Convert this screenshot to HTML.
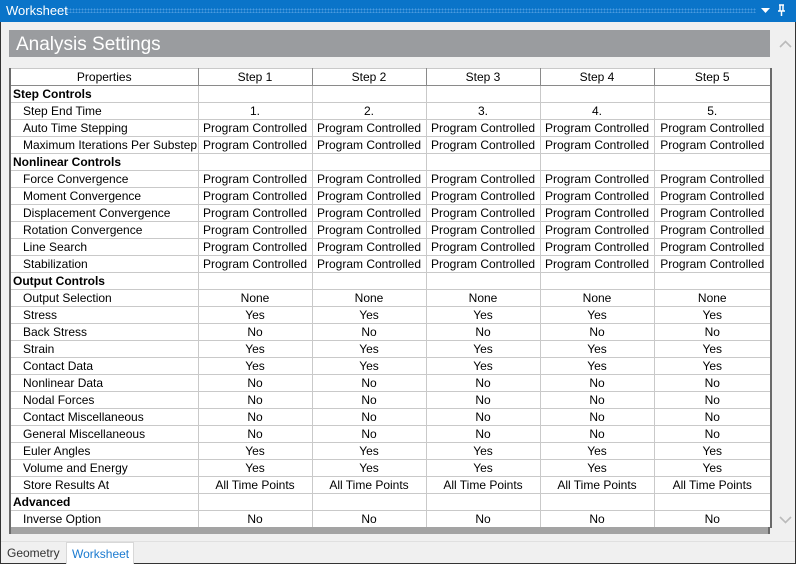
<!DOCTYPE html>
<html><head><meta charset="utf-8"><style>
*{margin:0;padding:0;box-sizing:border-box}
body{width:796px;height:564px;overflow:hidden;background:#f0f0f0;font-family:"Liberation Sans",sans-serif;font-size:12px;color:#000;position:relative}
.frame{position:absolute;left:0;top:0;width:796px;height:564px;border:1px solid #333;}
.title{position:absolute;left:0;top:0;width:796px;height:22px;background:#0a74c9;color:#fff;font-size:13px;padding:3px 0 0 6px}
.dots{position:absolute;left:66px;top:8px;width:690px;height:5px;background-image:radial-gradient(#4a9ade 40%,transparent 45%);background-size:3px 3px}
.hdr{position:absolute;left:9px;top:30px;width:761px;height:27px;background:#9a9c9f;color:#fff;font-size:19px;padding:4px 0 0 7px}
table{position:absolute;left:9px;top:68px;width:761px;border-collapse:collapse;table-layout:fixed;background:#fff;border-left:2px solid #6a6a6a;border-right:2px solid #6a6a6a;border-top:1px solid #6a6a6a}
td{height:17px;border:1px solid #c9c9c9;text-align:center;white-space:nowrap;overflow:hidden;line-height:15px;padding:0}
tr.h td{border-bottom:1px solid #8a8a8a;border-right:1px solid #8a8a8a}
td.p{text-align:left;padding-left:12px}
td.g{text-align:left;padding-left:2px;font-weight:bold}
.bot{position:absolute;left:9px;top:527px;width:761px;height:7px;background:#a3a3a3;border-left:2px solid #6a6a6a;border-right:2px solid #6a6a6a}
.sb{position:absolute;left:776px;top:23px;width:19px;height:514px;background:#f0f0f0}
.tabs{position:absolute;left:1px;top:541px;width:794px;height:22px;background:#f0f0f0;border-top:1px solid #e0e0e0}
.t1{position:absolute;left:6px;top:4px;color:#333}
.t2{position:absolute;left:65px;top:0;width:68px;height:22px;background:#fff;border:1px solid #d8d8d8;border-bottom:none;color:#1a7ad0;padding:4px 0 0 5px}
</style></head><body>
<div class="frame"></div>
<div class="title">Worksheet<div class="dots"></div>
<svg style="position:absolute;left:761px;top:7px" width="10" height="8"><path d="M0 1h9L4.5 6z" fill="#fff"/></svg>
<svg style="position:absolute;left:777px;top:4px" width="10" height="13"><path d="M2 1h5M3 1v6M6 1v6M1 7h7M4.5 7v5" stroke="#fff" stroke-width="1.5" fill="none"/></svg>
</div>
<div class="hdr">Analysis Settings</div>
<div class="sb">
<svg style="position:absolute;left:3px;top:17px" width="13" height="8"><path d="M1 7l5.5-5.5L12 7" stroke="#bbb" stroke-width="1.6" fill="none"/></svg>
<svg style="position:absolute;left:3px;top:493px" width="13" height="8"><path d="M1 1l5.5 5.5L12 1" stroke="#bbb" stroke-width="1.6" fill="none"/></svg>
</div>
<table>
<colgroup><col style="width:188px"><col style="width:114px"><col style="width:114px"><col style="width:114px"><col style="width:114px"><col style="width:117px"></colgroup>
<tr class="h"><td>Properties</td><td>Step 1</td><td>Step 2</td><td>Step 3</td><td>Step 4</td><td>Step 5</td></tr>
<tr><td class="g">Step Controls</td><td></td><td></td><td></td><td></td><td></td></tr>
<tr><td class="p">Step End Time</td><td>1.</td><td>2.</td><td>3.</td><td>4.</td><td>5.</td></tr>
<tr><td class="p">Auto Time Stepping</td><td>Program Controlled</td><td>Program Controlled</td><td>Program Controlled</td><td>Program Controlled</td><td>Program Controlled</td></tr>
<tr><td class="p">Maximum Iterations Per Substep</td><td>Program Controlled</td><td>Program Controlled</td><td>Program Controlled</td><td>Program Controlled</td><td>Program Controlled</td></tr>
<tr><td class="g">Nonlinear Controls</td><td></td><td></td><td></td><td></td><td></td></tr>
<tr><td class="p">Force Convergence</td><td>Program Controlled</td><td>Program Controlled</td><td>Program Controlled</td><td>Program Controlled</td><td>Program Controlled</td></tr>
<tr><td class="p">Moment Convergence</td><td>Program Controlled</td><td>Program Controlled</td><td>Program Controlled</td><td>Program Controlled</td><td>Program Controlled</td></tr>
<tr><td class="p">Displacement Convergence</td><td>Program Controlled</td><td>Program Controlled</td><td>Program Controlled</td><td>Program Controlled</td><td>Program Controlled</td></tr>
<tr><td class="p">Rotation Convergence</td><td>Program Controlled</td><td>Program Controlled</td><td>Program Controlled</td><td>Program Controlled</td><td>Program Controlled</td></tr>
<tr><td class="p">Line Search</td><td>Program Controlled</td><td>Program Controlled</td><td>Program Controlled</td><td>Program Controlled</td><td>Program Controlled</td></tr>
<tr><td class="p">Stabilization</td><td>Program Controlled</td><td>Program Controlled</td><td>Program Controlled</td><td>Program Controlled</td><td>Program Controlled</td></tr>
<tr><td class="g">Output Controls</td><td></td><td></td><td></td><td></td><td></td></tr>
<tr><td class="p">Output Selection</td><td>None</td><td>None</td><td>None</td><td>None</td><td>None</td></tr>
<tr><td class="p">Stress</td><td>Yes</td><td>Yes</td><td>Yes</td><td>Yes</td><td>Yes</td></tr>
<tr><td class="p">Back Stress</td><td>No</td><td>No</td><td>No</td><td>No</td><td>No</td></tr>
<tr><td class="p">Strain</td><td>Yes</td><td>Yes</td><td>Yes</td><td>Yes</td><td>Yes</td></tr>
<tr><td class="p">Contact Data</td><td>Yes</td><td>Yes</td><td>Yes</td><td>Yes</td><td>Yes</td></tr>
<tr><td class="p">Nonlinear Data</td><td>No</td><td>No</td><td>No</td><td>No</td><td>No</td></tr>
<tr><td class="p">Nodal Forces</td><td>No</td><td>No</td><td>No</td><td>No</td><td>No</td></tr>
<tr><td class="p">Contact Miscellaneous</td><td>No</td><td>No</td><td>No</td><td>No</td><td>No</td></tr>
<tr><td class="p">General Miscellaneous</td><td>No</td><td>No</td><td>No</td><td>No</td><td>No</td></tr>
<tr><td class="p">Euler Angles</td><td>Yes</td><td>Yes</td><td>Yes</td><td>Yes</td><td>Yes</td></tr>
<tr><td class="p">Volume and Energy</td><td>Yes</td><td>Yes</td><td>Yes</td><td>Yes</td><td>Yes</td></tr>
<tr><td class="p">Store Results At</td><td>All Time Points</td><td>All Time Points</td><td>All Time Points</td><td>All Time Points</td><td>All Time Points</td></tr>
<tr><td class="g">Advanced</td><td></td><td></td><td></td><td></td><td></td></tr>
<tr><td class="p">Inverse Option</td><td>No</td><td>No</td><td>No</td><td>No</td><td>No</td></tr>
</table>
<div class="bot"></div>
<div class="tabs"><span class="t1">Geometry</span><div class="t2">Worksheet</div></div>
</body></html>
